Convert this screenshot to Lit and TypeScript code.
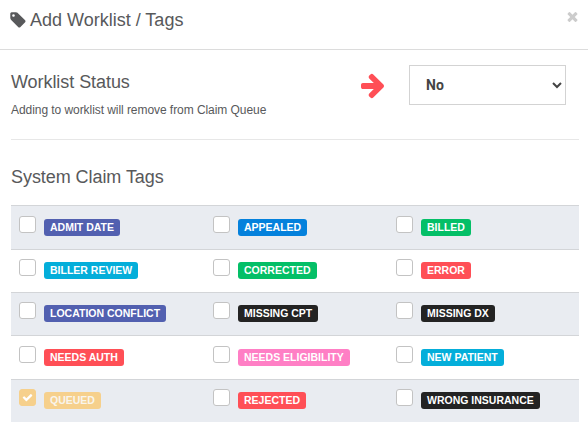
import { LitElement, html, css } from 'lit';
import { customElement, property } from 'lit/decorators.js';
import { classMap } from 'lit/directives/class-map.js';

export type TagColor = 'indigo' | 'blue' | 'green' | 'cyan' | 'red' | 'dark' | 'pink' | 'amber';

interface ClaimTag {
  label: string;
  color: TagColor;
  queued?: boolean;
}

const TAG_ROWS: ClaimTag[][] = [
  [
    { label: 'ADMIT DATE', color: 'indigo' },
    { label: 'APPEALED', color: 'blue' },
    { label: 'BILLED', color: 'green' },
  ],
  [
    { label: 'BILLER REVIEW', color: 'cyan' },
    { label: 'CORRECTED', color: 'green' },
    { label: 'ERROR', color: 'red' },
  ],
  [
    { label: 'LOCATION CONFLICT', color: 'indigo' },
    { label: 'MISSING CPT', color: 'dark' },
    { label: 'MISSING DX', color: 'dark' },
  ],
  [
    { label: 'NEEDS AUTH', color: 'red' },
    { label: 'NEEDS ELIGIBILITY', color: 'pink' },
    { label: 'NEW PATIENT', color: 'cyan' },
  ],
  [
    { label: 'QUEUED', color: 'amber', queued: true },
    { label: 'REJECTED', color: 'red' },
    { label: 'WRONG INSURANCE', color: 'dark' },
  ],
];

/**
 * @element claim-tag
 * @description A checkbox followed by a colored tag label.
 */
@customElement('claim-tag')
export class ClaimTagElement extends LitElement {
  static styles = css`
    :host {
      display: block;
    }

    .tag {
      display: flex;
      align-items: flex-start;
      gap: 8px;
      padding: 9.4px 8px 0;
    }

    .tag__box {
      display: flex;
      align-items: center;
      justify-content: center;
      box-sizing: border-box;
      width: 17px;
      height: 17px;
      flex-shrink: 0;
      border: 1px solid #c3c3c3;
      border-radius: 3px;
      background: #fff;
    }

    .tag__box--checked {
      border-color: #f6d08c;
      background: #f6d08c;
      padding-bottom: 1px;
    }

    .tag__box svg {
      width: 11px;
      height: 11px;
      flex-shrink: 0;
      fill: #fff;
    }

    .tag__label {
      height: 17px;
      margin-top: 3px;
      padding: 0 6px;
      border-radius: 3px;
      color: #fff;
      font-size: 10.5px;
      font-weight: 700;
      line-height: 17px;
      white-space: nowrap;
    }

    .tag__label--indigo { background: #5260b0; }
    .tag__label--blue { background: #0481dc; }
    .tag__label--green { background: #04bf67; }
    .tag__label--cyan { background: #04aeda; }
    .tag__label--red { background: #ff4f56; }
    .tag__label--dark { background: #232323; }
    .tag__label--pink { background: #ff7fc5; }
    .tag__label--amber { background: #f6d08c; color: #f9f5ec; }
  `;

  @property({ type: String })
  label = '';

  @property({ type: String })
  color: TagColor = 'dark';

  @property({ type: Boolean, reflect: true })
  checked = false;

  render() {
    return html`
      <div class="tag">
        <span
          class=${classMap({ tag__box: true, 'tag__box--checked': this.checked })}
          role="checkbox"
          aria-checked=${this.checked ? 'true' : 'false'}
          aria-label=${this.label}
        >
          ${this.checked
            ? html`
                <svg viewBox="0 0 1792 1792">
                  <path d="M1671 566q0 40-28 68l-724 724-136 136q-28 28-68 28t-68-28l-136-136-362-362q-28-28-28-68t28-68l136-136q28-28 68-28t68 28l294 295 656-657q28-28 68-28t68 28l136 136q28 28 28 68z"/>
                </svg>
              `
            : ''}
        </span>
        <span class=${classMap({ tag__label: true, [`tag__label--${this.color}`]: true })}>${this.label}</span>
      </div>
    `;
  }
}

/**
 * @element app-root
 * @description The dialog for setting a worklist status and claim tags.
 */
@customElement('app-root')
export class AppRoot extends LitElement {
  static styles = css`
    :host {
      display: block;
      box-sizing: border-box;
      height: 435px;
      overflow: hidden;
      background: #fff;
      color: #58595b;
      font-family: 'Liberation Sans', Arial, sans-serif;
    }

    h2,
    h3,
    p {
      margin: 0;
      font-weight: 400;
    }

    h2,
    h3 {
      font-size: 18px;
      line-height: 20px;
    }

    h3,
    p {
      letter-spacing: -0.06px;
    }

    /* Header */
    .header {
      display: flex;
      justify-content: space-between;
      align-items: flex-start;
      box-sizing: border-box;
      height: 50px;
      padding: 10px 8px 0 9px;
      border-bottom: 1px solid #dcdcdc;
    }

    .header__title {
      display: flex;
      gap: 3px;
    }

    .header__title svg {
      width: 18px;
      height: 18px;
      margin-top: 0.5px;
      fill: currentColor;
    }

    .header__close {
      width: 15px;
      height: 15px;
      margin-top: -1.5px;
      padding: 0;
      border: 0;
      background: none;
      line-height: 0;
    }

    .header__close svg {
      width: 15px;
      height: 15px;
      fill: #cccccc;
    }

    /* Worklist status */
    .status {
      display: flex;
      box-sizing: border-box;
      height: 90px;
      margin: 0 9px 0 11px;
      padding-top: 15px;
      border-bottom: 1px solid #e7e7e7;
    }

    .status__text {
      flex: 1;
      padding-top: 7px;
    }

    .status__text p {
      margin-top: 11px;
      font-size: 12px;
      line-height: 14px;
    }

    .status__arrow {
      width: 28px;
      height: 28px;
      margin: 6px 22px 0 0;
      fill: #ff4f56;
    }

    .select {
      display: grid;
      align-items: center;
      width: 157px;
      height: 40px;
      margin-right: 13px;
    }

    .select select,
    .select svg {
      grid-area: 1 / 1;
    }

    .select select {
      appearance: none;
      box-sizing: border-box;
      width: 157px;
      height: 40px;
      padding: 0 16px;
      border: 1px solid #d3d3d3;
      border-radius: 0;
      background: #fff;
      color: #444;
      font: 700 14px Roboto, sans-serif;
    }

    .select svg {
      justify-self: end;
      width: 10px;
      height: 8px;
      margin-right: 4px;
      fill: none;
      stroke: #444;
      stroke-width: 2;
      pointer-events: none;
    }

    /* Claim tags */
    .tags {
      margin: 0 9px 0 11px;
      padding-top: 27px;
    }

    .tags__table {
      margin-top: 18.2px;
    }

    .tags__row {
      display: grid;
      grid-template-columns: 194px 183px 1fr;
      box-sizing: border-box;
      height: 43.4px;
      border-top: 1px solid #d3d5d8;
    }

    .tags__row:nth-child(odd) {
      background: #e9ecf1;
    }
  `;

  render() {
    return html`
      <header class="header">
        <h2 class="header__title">
          <svg viewBox="0 0 1792 1792">
            <path d="M576 448q0-53-37.5-90.5t-90.5-37.5-90.5 37.5-37.5 90.5 37.5 90.5 90.5 37.5 90.5-37.5 37.5-90.5zm1067 576q0 53-37 90l-491 492q-39 37-91 37-53 0-90-37l-715-716q-38-37-64.5-101t-26.5-117v-416q0-52 38-90t90-38h416q53 0 117 26.5t102 64.5l715 714q37 39 37 91z"/>
          </svg>
          Add Worklist / Tags
        </h2>
        <button class="header__close" aria-label="Close">
          <svg viewBox="0 0 1792 1792">
            <path d="M1490 1322q0 40-28 68l-136 136q-28 28-68 28t-68-28l-294-294-294 294q-28 28-68 28t-68-28l-136-136q-28-28-28-68t28-68l294-294-294-294q-28-28-28-68t28-68l136-136q28-28 68-28t68 28l294 294 294-294q28-28 68-28t68 28l136 136q28 28 28 68t-28 68l-294 294 294 294q28 28 28 68z"/>
          </svg>
        </button>
      </header>

      <section class="status">
        <div class="status__text">
          <h3>Worklist Status</h3>
          <p>Adding to worklist will remove from Claim Queue</p>
        </div>
        <svg class="status__arrow" viewBox="0 0 1792 1792">
          <path d="M1600 960q0 54-37 91l-651 651q-39 37-91 37-51 0-90-37l-75-75q-38-38-38-91t38-91l293-293h-704q-52 0-84.5-37.5t-32.5-90.5v-128q0-53 32.5-90.5t84.5-37.5h704l-293-294q-38-36-38-90t38-90l75-75q38-38 90-38 53 0 91 38l651 651q37 35 37 90z"/>
        </svg>
        <div class="select">
          <select aria-label="Worklist Status">
            <option>No</option>
          </select>
          <svg viewBox="0 0 10 8"><path d="M1 2l4 4 4-4"/></svg>
        </div>
      </section>

      <section class="tags">
        <h3>System Claim Tags</h3>
        <div class="tags__table">
          ${TAG_ROWS.map(
            (row) => html`
              <div class="tags__row">
                ${row.map(
                  (tag) => html`
                    <claim-tag .label=${tag.label} .color=${tag.color} ?checked=${!!tag.queued}></claim-tag>
                  `
                )}
              </div>
            `
          )}
        </div>
      </section>
    `;
  }
}

declare global {
  interface HTMLElementTagNameMap {
    'claim-tag': ClaimTagElement;
    'app-root': AppRoot;
  }
}
